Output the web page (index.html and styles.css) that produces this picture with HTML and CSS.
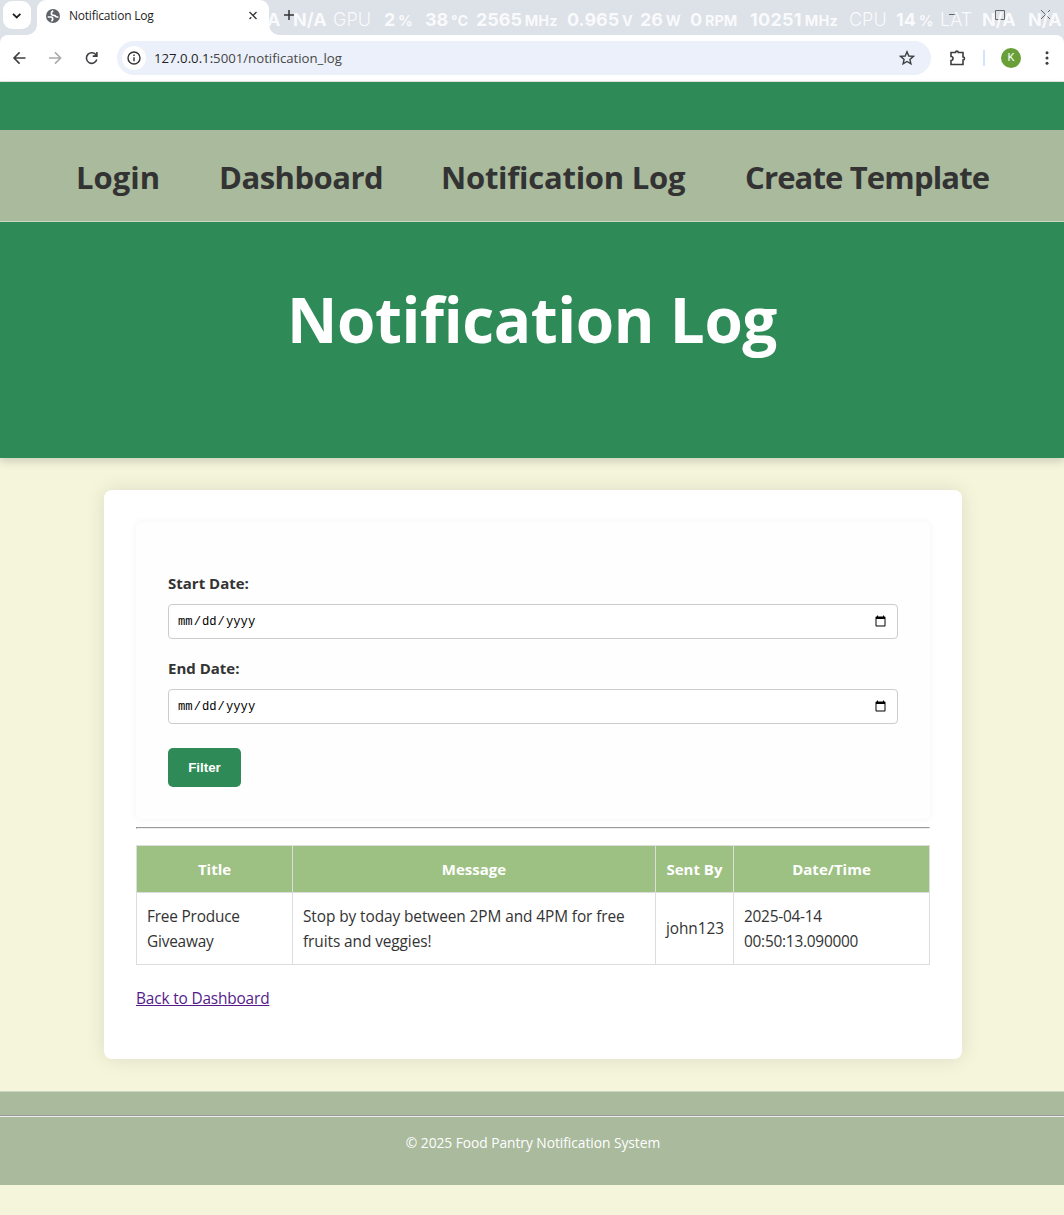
FILE: index.html
```html
<!DOCTYPE html>
<html lang="en-US">
<head>
<meta charset="utf-8">
<title>Notification Log</title>
<link rel="stylesheet" href="styles.css">
</head>
<body>
<div class="browser">
  <div class="tabstrip">
    <div class="tab-search">
      <svg width="28" height="28" viewBox="0 0 28 28"><path d="M10 12.8l3.7 3.6 3.7-3.6" fill="none" stroke="#1f1f1f" stroke-width="1.8"/></svg>
    </div>
    <div class="tab">
      <svg width="14" height="14" viewBox="0 0 14 14"><circle cx="7" cy="7" r="7" fill="#5f6368"/><path d="M7.200 1.700C5.200 2.700 4.700 5 6.200 6c1.300.8 2.800 0 3.500 1.300.5 1 1.500.8 2.700.5M1.700 8h3.500c1.300.2 1.600 1 1.500 2.200-.1 1-.8 1.200-.9 2.200" fill="none" stroke="#fff" stroke-width="1.700"/></svg>
      <span class="tab-title">Notification Log</span>
      <svg class="tab-close" width="10" height="10" viewBox="0 0 10 10"><path d="M1.500 1l7 7M8.500 1L4.600 4.900M3.300 6.200L1.500 8" fill="none" stroke="#333" stroke-width="1.300"/></svg>
    </div>
    <svg class="tab-new" width="12" height="12" viewBox="0 0 12 12"><path d="M6 1v10M1 6h10" stroke="#333" stroke-width="1.5"/></svg>
    <div class="window-buttons">
      <svg width="110" height="14" viewBox="0 0 110 14"><path d="M1 7.5h7M47.500 3.500h9v9h-9zM93 3l9 9M102 3l-9 9" fill="none" stroke="#666" stroke-width="1"/></svg>
    </div>
    <div class="monitor">
      <b class="m-a">A</b><b class="m-b">N/A</b><span class="m-c">GPU</span><b class="m-d">2 <small>%</small></b><b class="m-e">38 <small>°C</small></b><b class="m-f">2565 <small>MHz</small></b><b class="m-g">0.965 <small>V</small></b><b class="m-h">26 <small>W</small></b><b class="m-i">0 <small>RPM</small></b><b class="m-j">10251 <small>MHz</small></b><span class="m-k">CPU</span><b class="m-l">14 <small>%</small></b><span class="m-m">LAT</span><b class="m-n">N/A</b><b class="m-o">N/A</b>
    </div>
  </div>
  <div class="toolbar">
    <svg class="nav-icons" width="90" height="16" viewBox="0 0 90 16"><g fill="none" stroke-width="1.6"><path d="M13.5 8H2.2M7.6 2.4L2 8l5.6 5.6" stroke="#3c3f41"/><path d="M37 8h11.3M43 2.4L48.6 8 43 13.600" stroke="#aaa"/><path d="M84.200 5.200A5.300 5.300 0 1 0 84.800 9.600M84.900 2v4.100h-4.200" stroke="#3c3f41"/></g></svg>
    <div class="address">
      <span class="info"><svg width="14" height="14" viewBox="0 0 14 14"><circle cx="7" cy="7" r="6" fill="none" stroke="#333" stroke-width="1.4"/><path d="M7 6.200v4M7 3.500v1.500" stroke="#333" stroke-width="1.400"/></svg></span>
      <span class="url">127.0.0.1:<i>5001/notification_log</i></span>
      <svg class="star" width="16" height="16" viewBox="0 0 16 16"><path d="M8 1.800l1.800 4.200 4.600.4-3.500 3 1 4.500L8 11.500l-3.900 2.400 1-4.500-3.500-3 4.600-.4z" fill="none" stroke="#3c3f41" stroke-width="1.400"/></svg>
    </div>
    <svg class="puzzle" width="18" height="18" viewBox="0 0 18 18"><path d="M2 3.500h4.500a1.400 1.400 0 0 1 2.800 0H14V8a1.500 1.500 0 0 1 0 3v4.500H2v-4a2 2 0 0 0 0-4z" fill="none" stroke="#3c3f41" stroke-width="1.600"/></svg>
    <span class="divider"></span>
    <span class="avatar">K</span>
    <svg class="menu" width="4" height="16" viewBox="0 0 4 16" fill="#3c3f41"><circle cx="2" cy="2.700" r="1.500"/><circle cx="2" cy="8" r="1.500"/><circle cx="2" cy="13.300" r="1.500"/></svg>
  </div>
</div>
<header class="site-header">
  <nav class="site-nav">
    <a class="n-login">Login</a><a class="n-dash">Dashboard</a><a class="n-log">Notification Log</a><a class="n-create">Create Template</a>
  </nav>
  <h1>Notification Log</h1>
</header>
<main class="card">
  <form class="filter">
    <label for="start">Start Date:</label>
    <input type="date" id="start">
    <label for="end">End Date:</label>
    <input type="date" id="end">
    <button type="button">Filter</button>
  </form>
  <hr>
  <table>
    <colgroup><col class="c-title"><col class="c-message"><col class="c-sender"><col class="c-date"></colgroup>
    <thead><tr><th>Title</th><th>Message</th><th>Sent By</th><th>Date/Time</th></tr></thead>
    <tbody><tr><td>Free Produce<br>Giveaway</td><td>Stop by today between 2PM and 4PM for free<br>fruits and veggies!</td><td>john123</td><td>2025-04-14<br>00:50:13.090000</td></tr></tbody>
  </table>
  <a class="back" href="#">Back to Dashboard</a>
</main>
<footer class="site-footer">
  <hr>
  <p>© 2025 Food Pantry Notification System</p>
</footer>
</body>
</html>
```

FILE: styles.css
```css
* { box-sizing: border-box; }
body {
  margin: 0;
  height: 1215px;
  overflow: hidden;
  background: #f5f5dc;
  color: #333;
  font: 15.4px/25px "Open Sans", "Noto Sans", sans-serif;
}
svg { display: block; flex: none; }

/* browser window */
.browser { height: 82px; background: #dde1e8; }
.tabstrip { position: relative; display: flex; height: 35px; padding-left: 3px; }
.tab-search { width: 28px; height: 28px; margin-top: 1px; border-radius: 9px; background: #fff; }
.tab {
  position: relative;
  display: flex;
  align-items: center;
  width: 232px;
  height: 35px;
  margin-left: 6px;
  padding: 0 11px 4px 9px;
  border-radius: 9px 9px 0 0;
  background: #fff;
}
.tab::before, .tab::after {
  content: "";
  position: absolute;
  bottom: 0;
  width: 10px;
  height: 10px;
}
.tab::before { left: -10px; background: radial-gradient(circle at 0 0, transparent 9.500px, #fff 10px); }
.tab::after { right: -10px; background: radial-gradient(circle at 100% 0, transparent 9.500px, #fff 10px); }
.tab-title { margin-left: 9px; font-size: 12px; letter-spacing: -0.220px; color: #1f1f1f; }
.tab-close { margin-left: auto; }
.tab-new { margin: 9px 0 0 14px; }
.window-buttons { margin: 7px 6px 0 auto; }
.monitor {
  position: absolute;
  inset: 0;
  color: rgba(255, 255, 255, .85);
  font: 18px/24px Inter, sans-serif;
  white-space: pre;
}
.monitor b, .monitor span { position: absolute; top: 8px; }
.monitor span { font-weight: 300; }
.monitor small { font-size: 14.500px; font-weight: 700; margin-left: -1.500px; }
.m-a { left: 267px; } .m-b { left: 293px; } .m-c { left: 333px; }
.m-d { left: 384px; } .m-e { left: 425px; } .m-f { left: 476px; }
.m-g { left: 567px; } .m-h { left: 640px; } .m-i { left: 690px; }
.m-j { left: 750px; letter-spacing: .250px; } .m-k { left: 849px; } .m-l { left: 896px; }
.m-m { left: 940px; } .m-n { left: 982px; } .m-o { left: 1028px; }
.toolbar {
  display: flex;
  align-items: center;
  height: 47px;
  padding: 0 15px 1px 12px;
  border-bottom: 1px solid #e1e5e2;
  border-radius: 8px 8px 0 0;
  background: #fff;
}
.address {
  display: flex;
  align-items: center;
  width: 814px;
  height: 34px;
  margin-left: 15px;
  padding: 0 16px 0 5px;
  border-radius: 17px;
  background: #ebf0fa;
}
.info { display: grid; place-items: center; width: 24px; height: 24px; border-radius: 50%; background: #fff; }
.url { margin: 1px 0 0 8px; color: #1f1f1f; font-size: 13.200px; letter-spacing: 0; }
.url i { font-style: normal; color: #474747; }
.star { margin-left: auto; }
.puzzle { margin-left: 18px; }
.divider { width: 2px; height: 16px; margin-left: 16px; background: #d3e3fd; }
.avatar {
  width: 20px;
  height: 20px;
  margin-left: 16px;
  border-radius: 50%;
  background: #689f38;
  color: #fff;
  font: 11px/20px Roboto, sans-serif;
  text-align: center;
}
.menu { margin-left: auto; }

/* page header */
.site-header {
  height: 376px;
  padding-top: 48px;
  background: #2e8b57;
  box-shadow: 0 4px 8px rgba(0, 0, 0, .15);
  text-align: center;
}
.site-nav {
  display: flex;
  justify-content: center;
  gap: 60px;
  height: 92px;
  padding-left: 1px;
  border-bottom: 1px solid #ccd6c4;
  background: #a9ba9d;
  font-size: 31px;
  font-weight: 700;
  line-height: 95px;
  text-align: left;
  white-space: nowrap;
}
.n-login { width: 83px; } 
.n-dash { width: 162px; letter-spacing: -0.500px; }
.n-log { width: 244px; letter-spacing: -0.250px; }
.n-create { width: 244px; letter-spacing: -0.850px; }
h1 { margin: 53px 0 0; color: #fff; font-size: 62px; line-height: 88px; letter-spacing: -0.400px; white-space: nowrap; }

/* content */
.card {
  width: 858px;
  height: 569px;
  margin: 32px auto 0 104px;
  padding: 32px;
  border-radius: 8px;
  background: #fff;
  box-shadow: 0 0 20px rgba(0, 0, 0, .1);
}
.filter {
  display: flex;
  flex-direction: column;
  align-items: flex-start;
  height: 297px;
  padding: 48px 32px 32px;
  border-radius: 6px;
  background: #fefefe;
  box-shadow: 0 0 8px rgba(0, 0, 0, .05);
}
.filter label { margin: 1px 0 8px; font-size: 15px; font-weight: 700; }
.filter input {
  width: 730px;
  height: 35px;
  margin-bottom: 16px;
  padding: 9px 8px 8px;
  border: 1px solid #ccc;
  border-radius: 4px;
  background: #fff;
  color: #000;
  font: 12.200px "Liberation Mono", monospace;
}
.filter input::-webkit-calendar-picker-indicator { width: 13.333px; height: 13.333px; }
.filter button {
  width: 73px;
  height: 39px;
  margin-top: 8px;
  border: 0;
  border-radius: 5px;
  background: #2e8b57;
  color: #fff;
  font: bold 13.333px "Liberation Sans", Arial, sans-serif;
}
hr { margin: 8px 0; }
table { width: 794px; margin-top: 16px; border-collapse: collapse; table-layout: fixed; white-space: nowrap; }
.c-title { width: 156px; } .c-message { width: 363px; }
.c-sender { width: 78px; } .c-date { width: 196px; }
th, td { height: 47px; padding: 10px; border: 1px solid #ddd; }
th { background: #9dc183; color: #fff; font-size: 15px; }
td { height: 72px; text-align: left; letter-spacing: -0.080px; }
td:last-child { letter-spacing: -0.240px; }
td:first-child { letter-spacing: -0.200px; }
.back { display: block; width: max-content; margin-top: 21px; color: #551a8b; letter-spacing: -0.160px; }

/* footer */
.site-footer {
  height: 94px;
  margin-top: 32px;
  padding-top: 23px;
  border-top: 1px solid #ccd6c4;
  background: #a9ba9d;
  color: #fff;
  font-size: 13.800px;
  text-align: center;
}
.site-footer hr { margin: 0 -1px; }
.site-footer p { margin: 13px 0 0 2px; letter-spacing: -0.050px; }
```
